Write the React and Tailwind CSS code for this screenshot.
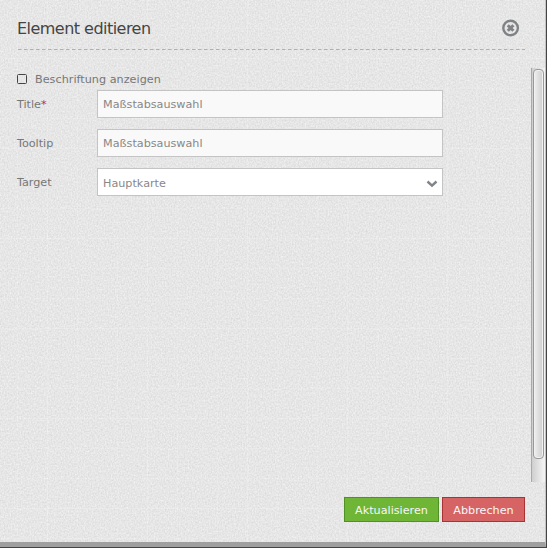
import React from 'react';

function PaperTexture() {
  return (
    <svg className="pointer-events-none absolute inset-0 h-full w-full" aria-hidden="true">
      <filter id="grain" x="0" y="0" width="100%" height="100%" colorInterpolationFilters="sRGB">
        <feTurbulence type="fractalNoise" baseFrequency="0.7 0.55" numOctaves="2" seed="8" stitchTiles="stitch" />
        <feColorMatrix values="0.13 0 0 0 0.837  0.13 0 0 0 0.837  0.13 0 0 0 0.837  0 0 0 0 1" />
      </filter>
      <pattern id="weave" width="100" height="90" x="47" y="58" patternUnits="userSpaceOnUse">
        <path d="M0.5 0V90M0 0.5H100" stroke="#fff" strokeOpacity="0.16" />
        <path d="M30.5 0V90M0 30.5H100M70.5 0V90M0 60.5H100" stroke="#fff" strokeOpacity="0.1" />
      </pattern>
      <rect width="100%" height="100%" filter="url(#grain)" />
      <rect width="100%" height="100%" fill="url(#weave)" />
    </svg>
  );
}

function Field({ label, required, children }) {
  return (
    <div className="mb-[11px] flex h-7 items-center">
      <label className="w-20 shrink-0 pt-px text-[#777]">
        {label}
        {required && <span className="text-[#b5323c]">*</span>}
      </label>
      {children}
    </div>
  );
}

function TextInput({ value }) {
  return (
    <input
      readOnly
      value={value}
      className="h-7 w-[346px] border border-[#c4c4c4] bg-[#f9f9f9] px-[5px] text-[#888] outline-none"
    />
  );
}

export default function App() {
  return (
    <div className="h-[548px] w-[547px] overflow-hidden bg-[#444] pr-px font-['DejaVu_Sans',sans-serif] text-[11.2px] leading-[14px]">
      <div className="relative h-[547px] border-r border-b-[5px] border-r-[#c4c4c4] border-b-[#9f9f9f] bg-[#e6e6e6]">
        <PaperTexture />
        <div className="relative flex h-full flex-col pl-[17px]">
          <header className="mr-5 flex h-[49px] shrink-0 items-start justify-between pr-[5px] pt-[18px]">
            <h1 className="pt-px text-[16px] leading-5 tracking-[-0.53px] text-[#444]">Element editieren</h1>
            <svg className="mt-px h-[18px] w-[18px]" viewBox="0 0 18 18">
              <circle cx="8.6" cy="9" r="7.3" fill="none" stroke="#808385" strokeWidth="2.4" />
              <path d="M5.8 6.2l5.6 5.6M11.4 6.2l-5.6 5.6" stroke="#808385" strokeWidth="3" />
            </svg>
          </header>
          <svg className="h-px w-[508px] shrink-0">
            <path d="M1 0.5H508" stroke="#b0b0b0" strokeDasharray="3.5 2.5" />
          </svg>

          <div className="mt-[18px] flex h-[414px] shrink-0">
            <main className="flex-1">
              <div className="flex h-[22px] items-center text-[#777]">
                <span className="mr-2 h-[10px] w-[10px] rounded-[1.5px] border border-[#444]" />
                <span className="pt-px tracking-[0.03px]">Beschriftung anzeigen</span>
              </div>
              <Field label="Title" required>
                <TextInput value="Maßstabsauswahl" />
              </Field>
              <Field label="Tooltip">
                <TextInput value="Maßstabsauswahl" />
              </Field>
              <Field label="Target">
                <div className="flex h-7 w-[346px] items-center justify-between border border-[#c4c4c4] bg-white pl-[5px] pr-1 text-[#888]">
                  <span className="pt-[3px]">Hauptkarte</span>
                  <svg className="mt-1 h-2 w-3" viewBox="0 0 12 8">
                    <path d="M1.5 1.5L6 5.7l4.5-4.2" fill="none" stroke="#808488" strokeWidth="2.4" />
                  </svg>
                </div>
              </Field>
            </main>
            <div className="w-[14px] border-l border-[#aaa] bg-linear-to-r from-[#cfcfcf] to-[#f5f5f5] pl-px pt-px">
              <div className="h-[390px] w-[11px] rounded-[4px] border border-[#999] bg-linear-to-r from-[#efefef] via-[#dedede] to-[#cfcfcf] shadow-[inset_0_0_0_1px_#f1f1f1]" />
            </div>
          </div>

          <footer className="mt-[15px] flex justify-end gap-[3px] pr-5 text-[#f7f7f7]">
            <button className="h-[25px] w-[95px] border border-[#4f9125] bg-[#6fb536] pt-[3px]">Aktualisieren</button>
            <button className="h-[25px] w-[83px] border border-[#a93232] bg-[#d66464] pt-[3px]">Abbrechen</button>
          </footer>
        </div>
      </div>
    </div>
  );
}
